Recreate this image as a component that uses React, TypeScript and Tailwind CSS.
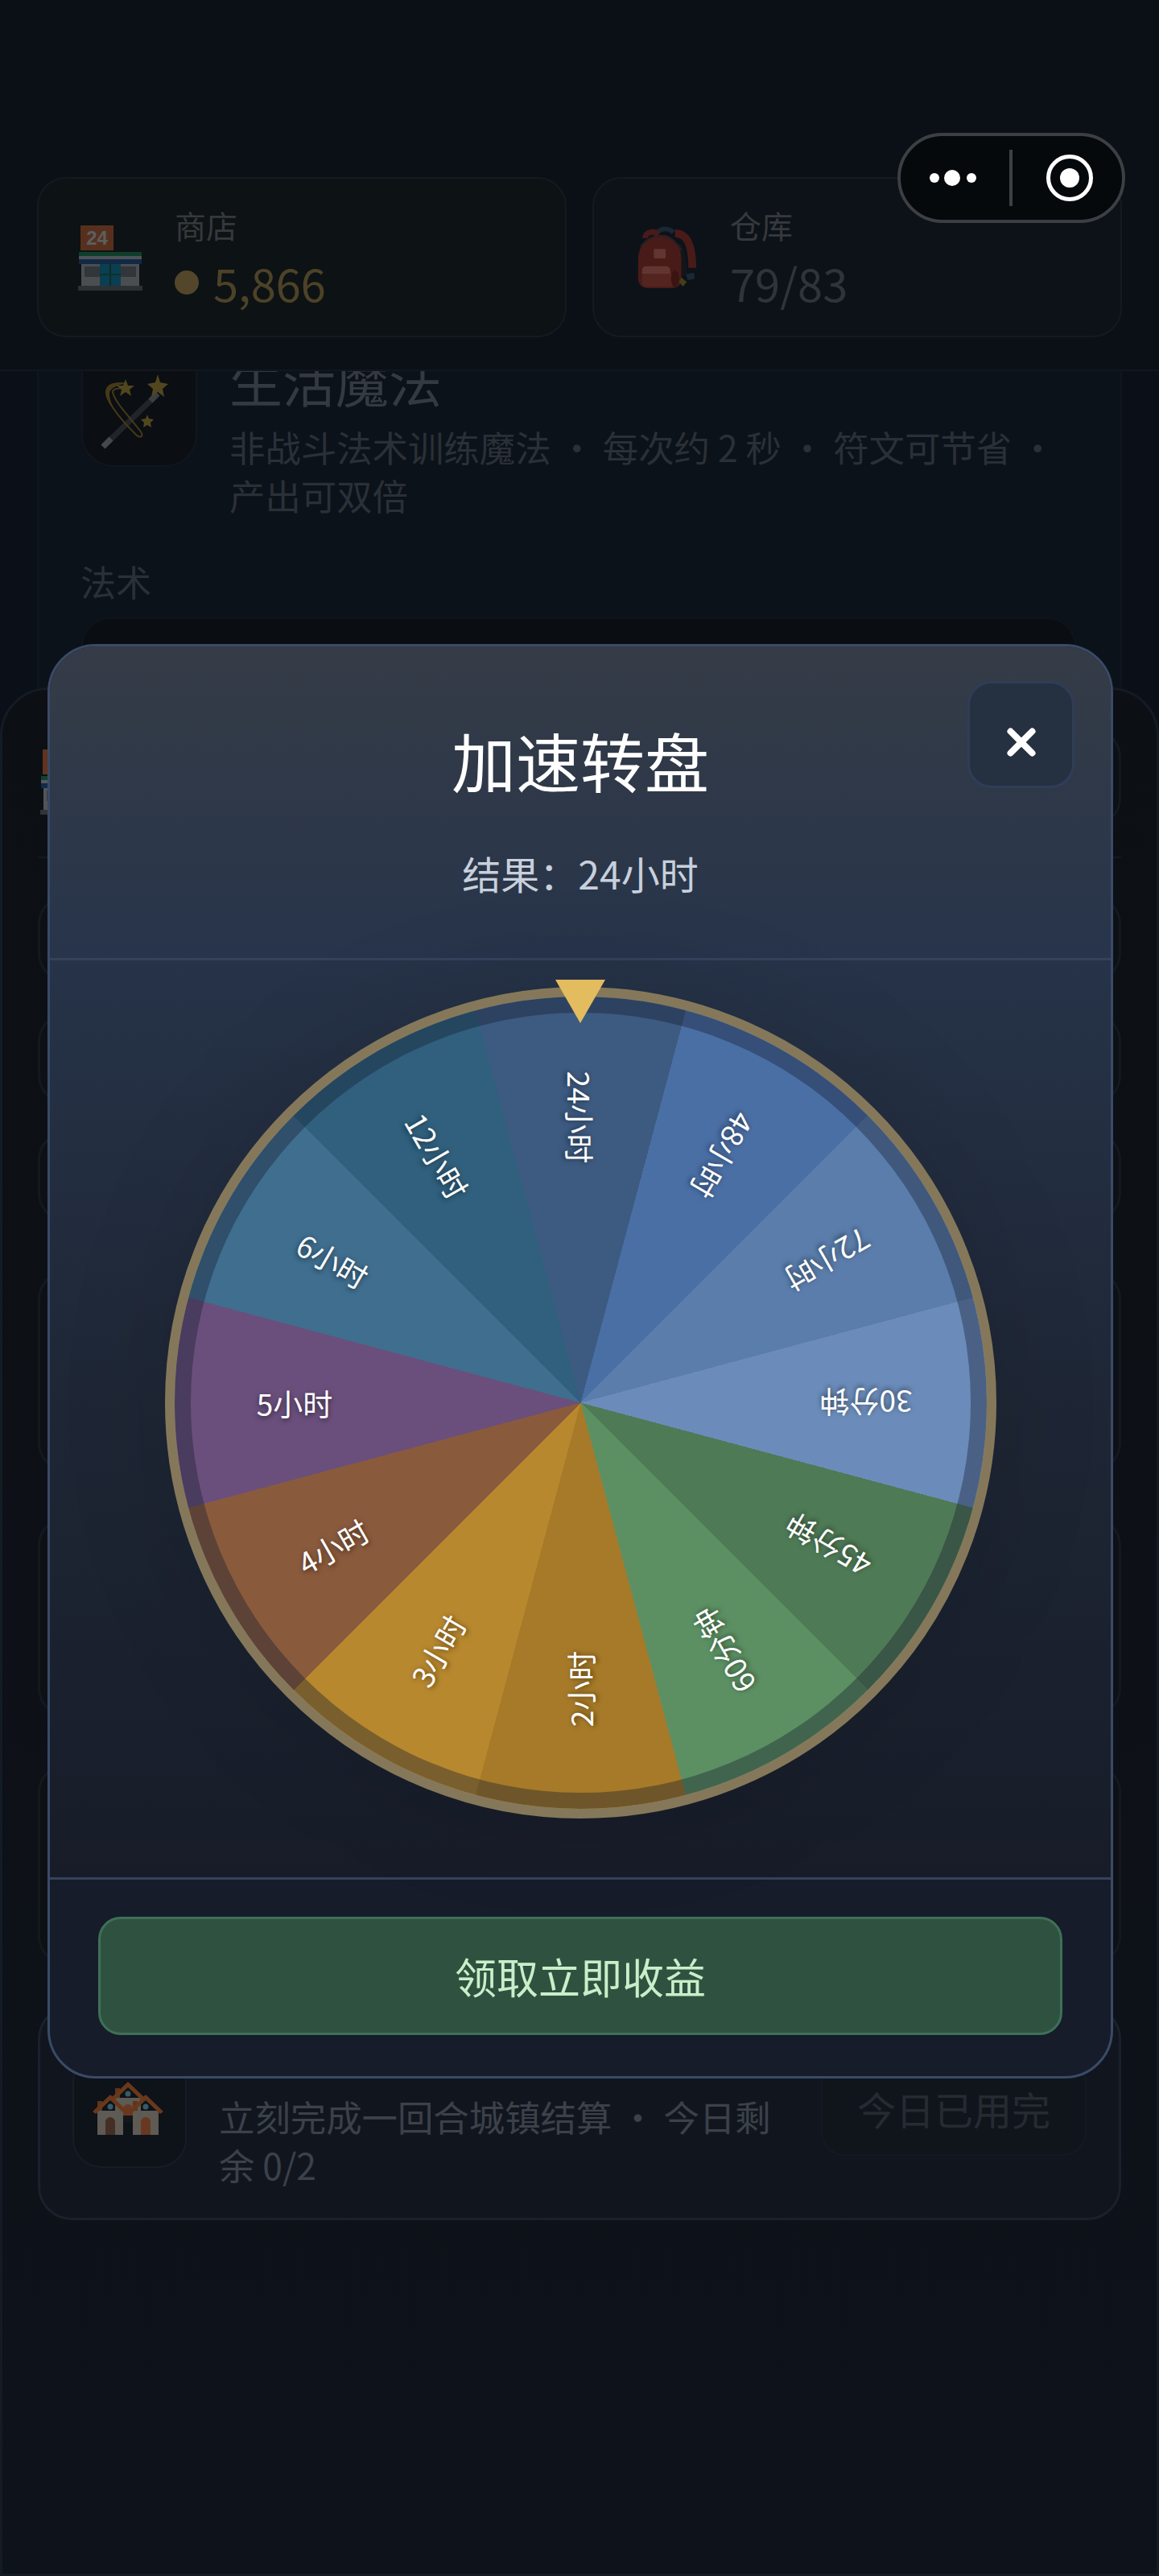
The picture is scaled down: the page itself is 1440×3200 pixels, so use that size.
import React from 'react';

const font = { fontFamily: '"Noto Sans CJK SC", "Noto Sans", sans-serif' };

const slices = [
  { label: '24小时', angle: 0 },
  { label: '48小时', angle: 30 },
  { label: '72小时', angle: 60 },
  { label: '30分钟', angle: 90 },
  { label: '45分钟', angle: 120 },
  { label: '60分钟', angle: 150 },
  { label: '2小时', angle: 180 },
  { label: '3小时', angle: 210 },
  { label: '4小时', angle: 240 },
  { label: '5小时', angle: 270 },
  { label: '6小时', angle: 300 },
  { label: '12小时', angle: 330 },
];

const StoreEmoji = ({ className }: { className: string }) => (
  <svg viewBox="0 0 80 82" className={className}>
    <rect x="3" y="0" width="41" height="31" fill="#6a3820" />
    <text x="23.5" y="24" textAnchor="middle" fontSize="24" fontWeight="700" fill="#6f7174" style={{ fontFamily: '"Liberation Sans", sans-serif' }}>24</text>
    <rect x="1" y="33" width="78" height="5" fill="#0f4a30" />
    <rect x="1" y="38" width="78" height="4" fill="#5f6265" />
    <rect x="1" y="42" width="78" height="6" fill="#122f52" />
    <rect x="4" y="48" width="72" height="28" fill="#5a5d60" />
    <rect x="8" y="51" width="19" height="13" fill="#3c4044" />
    <rect x="53" y="51" width="19" height="13" fill="#3c4044" />
    <rect x="27" y="48" width="26" height="28" fill="#0b4a60" />
    <rect x="39" y="48" width="2" height="28" fill="#0c332b" />
    <rect x="27" y="60" width="26" height="2" fill="#0c3d2b" />
    <rect x="0" y="75" width="80" height="6" fill="#35393d" />
  </svg>
);

const BackpackEmoji = ({ className }: { className: string }) => (
  <svg viewBox="0 0 80 84" className={className}>
    <path d="M30 8c6-5 14-5 20 1" fill="none" stroke="#1c2a38" strokeWidth="6" />
    <path d="M14 16c0-8 12-10 16-4" fill="none" stroke="#4f1d1a" strokeWidth="7" />
    <path d="M52 10c14 0 22 12 22 44" fill="none" stroke="#4f1d1a" strokeWidth="10" />
    <path d="M56 24c6 10 8 24 8 40" fill="none" stroke="#14161b" strokeWidth="7" />
    <path d="M34 12c16 0 26 14 26 32v24c0 8-5 12-12 12H18C10 80 5 75 5 68V44C5 26 16 12 34 12z" fill="#4f1d1a" />
    <path d="M8 28C14 18 24 14 34 14s20 6 26 18" fill="none" stroke="#2c2226" strokeWidth="2" />
    <rect x="25" y="30" width="15" height="12" rx="1" fill="#6b3a33" />
    <path d="M10 58c0-4 2-6 6-6h24c4 0 6 2 6 6v4H10z" fill="#6b3a33" />
    <rect x="10" y="62" width="46" height="16" rx="4" fill="#5c2620" />
    <ellipse cx="52" cy="68" rx="5" ry="11" fill="#3f1512" />
    <path d="M60 66l7 6-5 6-5-6z" fill="#4a4218" />
    <path d="M66 62l10-2 1 8-9 2z" fill="#1c2a38" />
  </svg>
);

const WandEmoji = ({ className }: { className: string }) => (
  <svg viewBox="0 0 104 100" className={className}>
    <path d="M22 90 L88 26" stroke="#26292d" strokeWidth="7" />
    <path d="M22 90 L32 80" stroke="#505356" strokeWidth="7" />
    <path d="M81 33 L90 24" stroke="#45484b" strokeWidth="7" />
    <path d="M52 12C34 8 22 16 28 30c6 14 22 32 34 44 6 6 12 4 6-4C56 54 36 34 34 22c0-4 8-6 20-4" fill="none" stroke="#4f4219" strokeWidth="2" />
    <path d="M48 12C32 8 22 14 26 28c2 6 6 12 10 16-4-8-6-14-6-20 0-6 8-10 18-12z" fill="#4f4219" />
    <polygon points="50,6 53,14 61,14 55,19 57,27 50,22 43,27 45,19 39,14 47,14" fill="#5f5020" />
    <polygon points="90,0 93,10 103,12 96,18 98,28 90,22 82,28 84,18 77,12 87,10" fill="#5f5020" />
    <polygon points="77,50 79,55 85,56 81,60 82,66 77,63 72,66 73,60 69,56 75,55" fill="#5f5020" />
  </svg>
);

const House = ({ x, y, door }: { x: number; y: number; door: string }) => (
  <g transform={`translate(${x} ${y})`}>
    <rect x="6" y="8" width="6" height="14" fill="#6d3a1c" />
    <rect x="6" y="20" width="32" height="30" fill="#6d675f" />
    <path d="M22 0 L44 21 L40 24 L22 7 L4 24 L0 21 Z" fill="#7a3f1c" />
    <circle cx="22" cy="15" r="3.5" fill="#3f6873" />
    <path d="M16 50V34a6 6 0 0 1 12 0V50z" fill={door} />
  </g>
);

const HousesEmoji = ({ className }: { className: string }) => (
  <svg viewBox="0 0 88 66" className={className}>
    <House x={22} y={0} door="#7a3f25" />
    <rect x="36" y="42" width="16" height="8" fill="#14171c" />
    <House x={0} y={16} door="#4f3329" />
    <House x={44} y={16} door="#7a3f25" />
  </svg>
);

function HeaderCard({ title, children, icon, tint }: { title: string; children: React.ReactNode; icon: React.ReactNode; tint: string }) {
  return (
    <div className={`flex-1 h-[199px] rounded-[36px] border-2 border-[#141a20] flex items-center pl-[49px] ${tint}`}>
      <div className="w-[80px] flex justify-center shrink-0">{icon}</div>
      <div className="ml-[40px] flex flex-col -mt-[2px]">
        <div className="text-[39px] leading-[56px] text-[#36393c]">{title}</div>
        <div className="mt-[8px] h-[72px] flex items-center text-[56px] leading-[72px]">{children}</div>
      </div>
    </div>
  );
}

function GhostCard({ className }: { className: string }) {
  return <div className={`rounded-[36px] border-[3px] border-[#14191f] bg-[#0d1115] ${className}`} />;
}

function Background() {
  return (
    <div className="h-[3200px] bg-[#0b1018] flex flex-col overflow-hidden">
      {/* 顶部状态栏 */}
      <div className="relative z-10 h-[461px] pt-[220px] px-[46px] bg-[#0b1016] border-b-2 border-[#12171e]">
        <div className="flex gap-[32px]">
          <HeaderCard title="商店" tint="bg-[#0d1215]" icon={<StoreEmoji className="w-[80px] h-[82px] mt-[2px] opacity-80" />}>
            <span className="w-[30px] h-[30px] rounded-full bg-[#54462a] mr-[18px]" />
            <span className="text-[#4d4227]">5,866</span>
          </HeaderCard>
          <HeaderCard title="仓库" tint="bg-[#0d1219]" icon={<BackpackEmoji className="w-[78px] h-[82px] mt-[2px] opacity-90" />}>
            <span className="text-[#2f343b]">79/83</span>
          </HeaderCard>
        </div>
      </div>

      {/* 魔法卡片 */}
      <div className="h-[393px] mx-[46px] pl-[53px] pr-[55px] bg-[#0c121a] border-x-2 border-[#10161d] overflow-hidden shrink-0">
        <div className="-mt-[38px] flex">
          <div className="w-[144px] h-[157px] rounded-[40px] bg-[#0b0e13] border-2 border-[#11151c] flex items-center justify-center shrink-0">
            <WandEmoji className="w-[104px] h-[100px] -ml-[30px] mt-[26px] opacity-85" />
          </div>
          <div className="ml-[40px] flex-1">
            <div className="mt-[8px] text-[66px] leading-[80px] text-[#353a40]">生活魔法</div>
            <div className="mt-[14px] text-[44.4px] leading-[60px] text-[#2b3037]">非战斗法术训练魔法 ・ 每次约 2 秒 ・ 符文可节省 ・<br />产出可双倍</div>
          </div>
        </div>
        <div className="mt-[47px] -ml-[1px] text-[44px] leading-[60px] text-[#2b3037]">法术</div>
        <div className="mt-[15px] h-[100px] rounded-t-[36px] bg-[#0a0e13] border-2 border-[#0f1419]" />
      </div>

      {/* 下方面板 */}
      <div className="flex-1 rounded-t-[60px] border-[3px] border-[#141b24] bg-gradient-to-b from-[#0c1014] to-[#0e121a] px-[44px] relative z-0">
        <div className="mt-[48px] h-[122px] flex justify-between">
          <StoreEmoji className="w-[80px] h-[82px] ml-[3px] mt-[26px] opacity-90" />
          <div className="w-[200px] rounded-[36px] border-[3px] border-[#14191f]" />
        </div>
        <div className="mt-[37px] border-t-2 border-[#14191f]" />
        <GhostCard className="mt-[46px] h-[108px]" />
        <GhostCard className="mt-[38px] h-[114px]" />
        <GhostCard className="mt-[33px] h-[113px]" />
        <GhostCard className="mt-[60px] h-[250px]" />
        <GhostCard className="mt-[56px] h-[249px]" />
        <GhostCard className="mt-[58px] h-[250px]" />
        <div className="mt-[50px] h-[267px] rounded-[42px] border-[3px] border-[#1a212b] bg-[#11161e] pl-[40px] pr-[40px] flex">
          <div className="mt-[57px] w-[142px] h-[142px] rounded-[36px] bg-[#0e1219] border-2 border-[#171c25] flex items-center justify-center shrink-0">
            <HousesEmoji className="w-[88px] h-[66px] mt-[-6px] -translate-x-[2px] opacity-85" />
          </div>
          <div className="ml-[40px] mt-[105px] w-[700px] text-[44.4px] leading-[60px] text-[#3c414a]">立刻完成一回合城镇结算 ・ 今日剩余 0/2</div>
          <div className="ml-auto mt-[66px] w-[330px] h-[118px] rounded-[30px] bg-[#10151c] border-2 border-[#141a22] flex items-center justify-center text-[48px] text-[#262b32]">今日已用完</div>
        </div>
      </div>
    </div>
  );
}

function Wheel() {
  return (
    <div className="relative w-[1033px] h-[1033px]">
      <div className="absolute inset-0 rounded-full border-[12px] border-[#85785a] bg-[conic-gradient(from_-15deg,#3d5a80_0deg_30deg,#4a6fa5_30deg_60deg,#5a7dab_60deg_90deg,#6b8cba_90deg_120deg,#4f7a56_120deg_150deg,#5c9063_150deg_180deg,#a67a28_180deg_210deg,#b8882e_210deg_240deg,#8a5a3c_240deg_270deg,#6a4f7c_270deg_300deg,#3f6e8f_300deg_330deg,#30607d_330deg_360deg)] shadow-[inset_0_0_0_20px_rgba(20,28,48,0.38),0_0_140px_rgba(0,0,0,0.12)]" />
      {slices.map((slice) => (
        <div
          key={slice.label}
          className="absolute left-1/2 top-1/2 w-0 h-0 flex items-center justify-center"
          style={{ transform: `rotate(${slice.angle}deg) translateY(-355px) rotate(90deg)` }}
        >
          <span className="whitespace-nowrap text-[37px] leading-[48px] text-white [text-shadow:0_2px_6px_rgba(0,0,0,0.55)]">{slice.label}</span>
        </div>
      ))}
      {/* 指针 */}
      <div className="absolute left-1/2 -top-[9px] -translate-x-1/2 w-0 h-0 border-x-[31px] border-x-transparent border-t-[54px] border-t-[#e2bc5e]" />
    </div>
  );
}

function SpinModal() {
  return (
    <div className="absolute inset-0 z-20 pt-[800px] pl-[59px]">
      <div className="relative w-[1324px] h-[1782px] rounded-[60px] border-[3px] border-[#3a4a68] overflow-hidden flex flex-col bg-[#161c29]">
        <div className="h-[390px] shrink-0 bg-gradient-to-b from-[#353c47] to-[#27344a] border-b-[3px] border-[#34425c] flex flex-col items-center">
          <h1 className="mt-[85px] text-[80px] leading-[110px] font-normal text-white">加速转盘</h1>
          <p className="mt-[53px] text-[48px] leading-[66px] text-[#c8d0dc]">结果：24小时</p>
        </div>
        <button className="absolute top-[43px] right-[45px] w-[133px] h-[133px] rounded-[30px] bg-[#253041] border-[3px] border-[#2f3d58] flex items-center justify-center">
          <svg viewBox="0 0 36 36" className="w-[36px] h-[36px] mt-[18px]">
            <path d="M4.5 4.5 L31.5 31.5 M31.5 4.5 L4.5 31.5" stroke="#fff" strokeWidth="8" strokeLinecap="round" />
          </svg>
        </button>
        <div className="h-[1142px] shrink-0 bg-gradient-to-b from-[#263348] via-[#1e2635] to-[#171c28] border-b-[3px] border-[#34425c] flex justify-center pt-[33px]">
          <Wheel />
        </div>
        <div className="flex-1 px-[60px] pt-[46px]">
          <button className="w-full h-[147px] rounded-[28px] bg-[#2f5240] border-[3px] border-[#3f7057] text-[52px] text-[#c9eec9]">领取立即收益</button>
        </div>
      </div>
    </div>
  );
}

function StatusCapsule() {
  return (
    <div className="absolute z-30 left-[1115px] top-[165px] w-[283px] h-[112px] rounded-full border-4 border-[#3c3f44] bg-[#06090c] flex items-center">
      <svg viewBox="0 0 60 20" className="ml-[35px] w-[60px] h-[20px]">
        <circle cx="7" cy="10" r="6" fill="#fff" />
        <circle cx="29" cy="10" r="10" fill="#fff" />
        <circle cx="53" cy="10" r="6" fill="#fff" />
      </svg>
      <div className="ml-[40px] w-[4px] h-[70px] bg-[#3c3f44]" />
      <svg viewBox="0 0 60 60" className="ml-[41px] w-[60px] h-[60px]">
        <circle cx="30" cy="30" r="26.5" fill="none" stroke="#fff" strokeWidth="5" />
        <circle cx="30" cy="30" r="12" fill="#fff" />
      </svg>
    </div>
  );
}

export default function App() {
  return (
    <div className="relative w-[1440px] h-[3200px] overflow-hidden" style={font}>
      <Background />
      <SpinModal />
      <StatusCapsule />
    </div>
  );
}
